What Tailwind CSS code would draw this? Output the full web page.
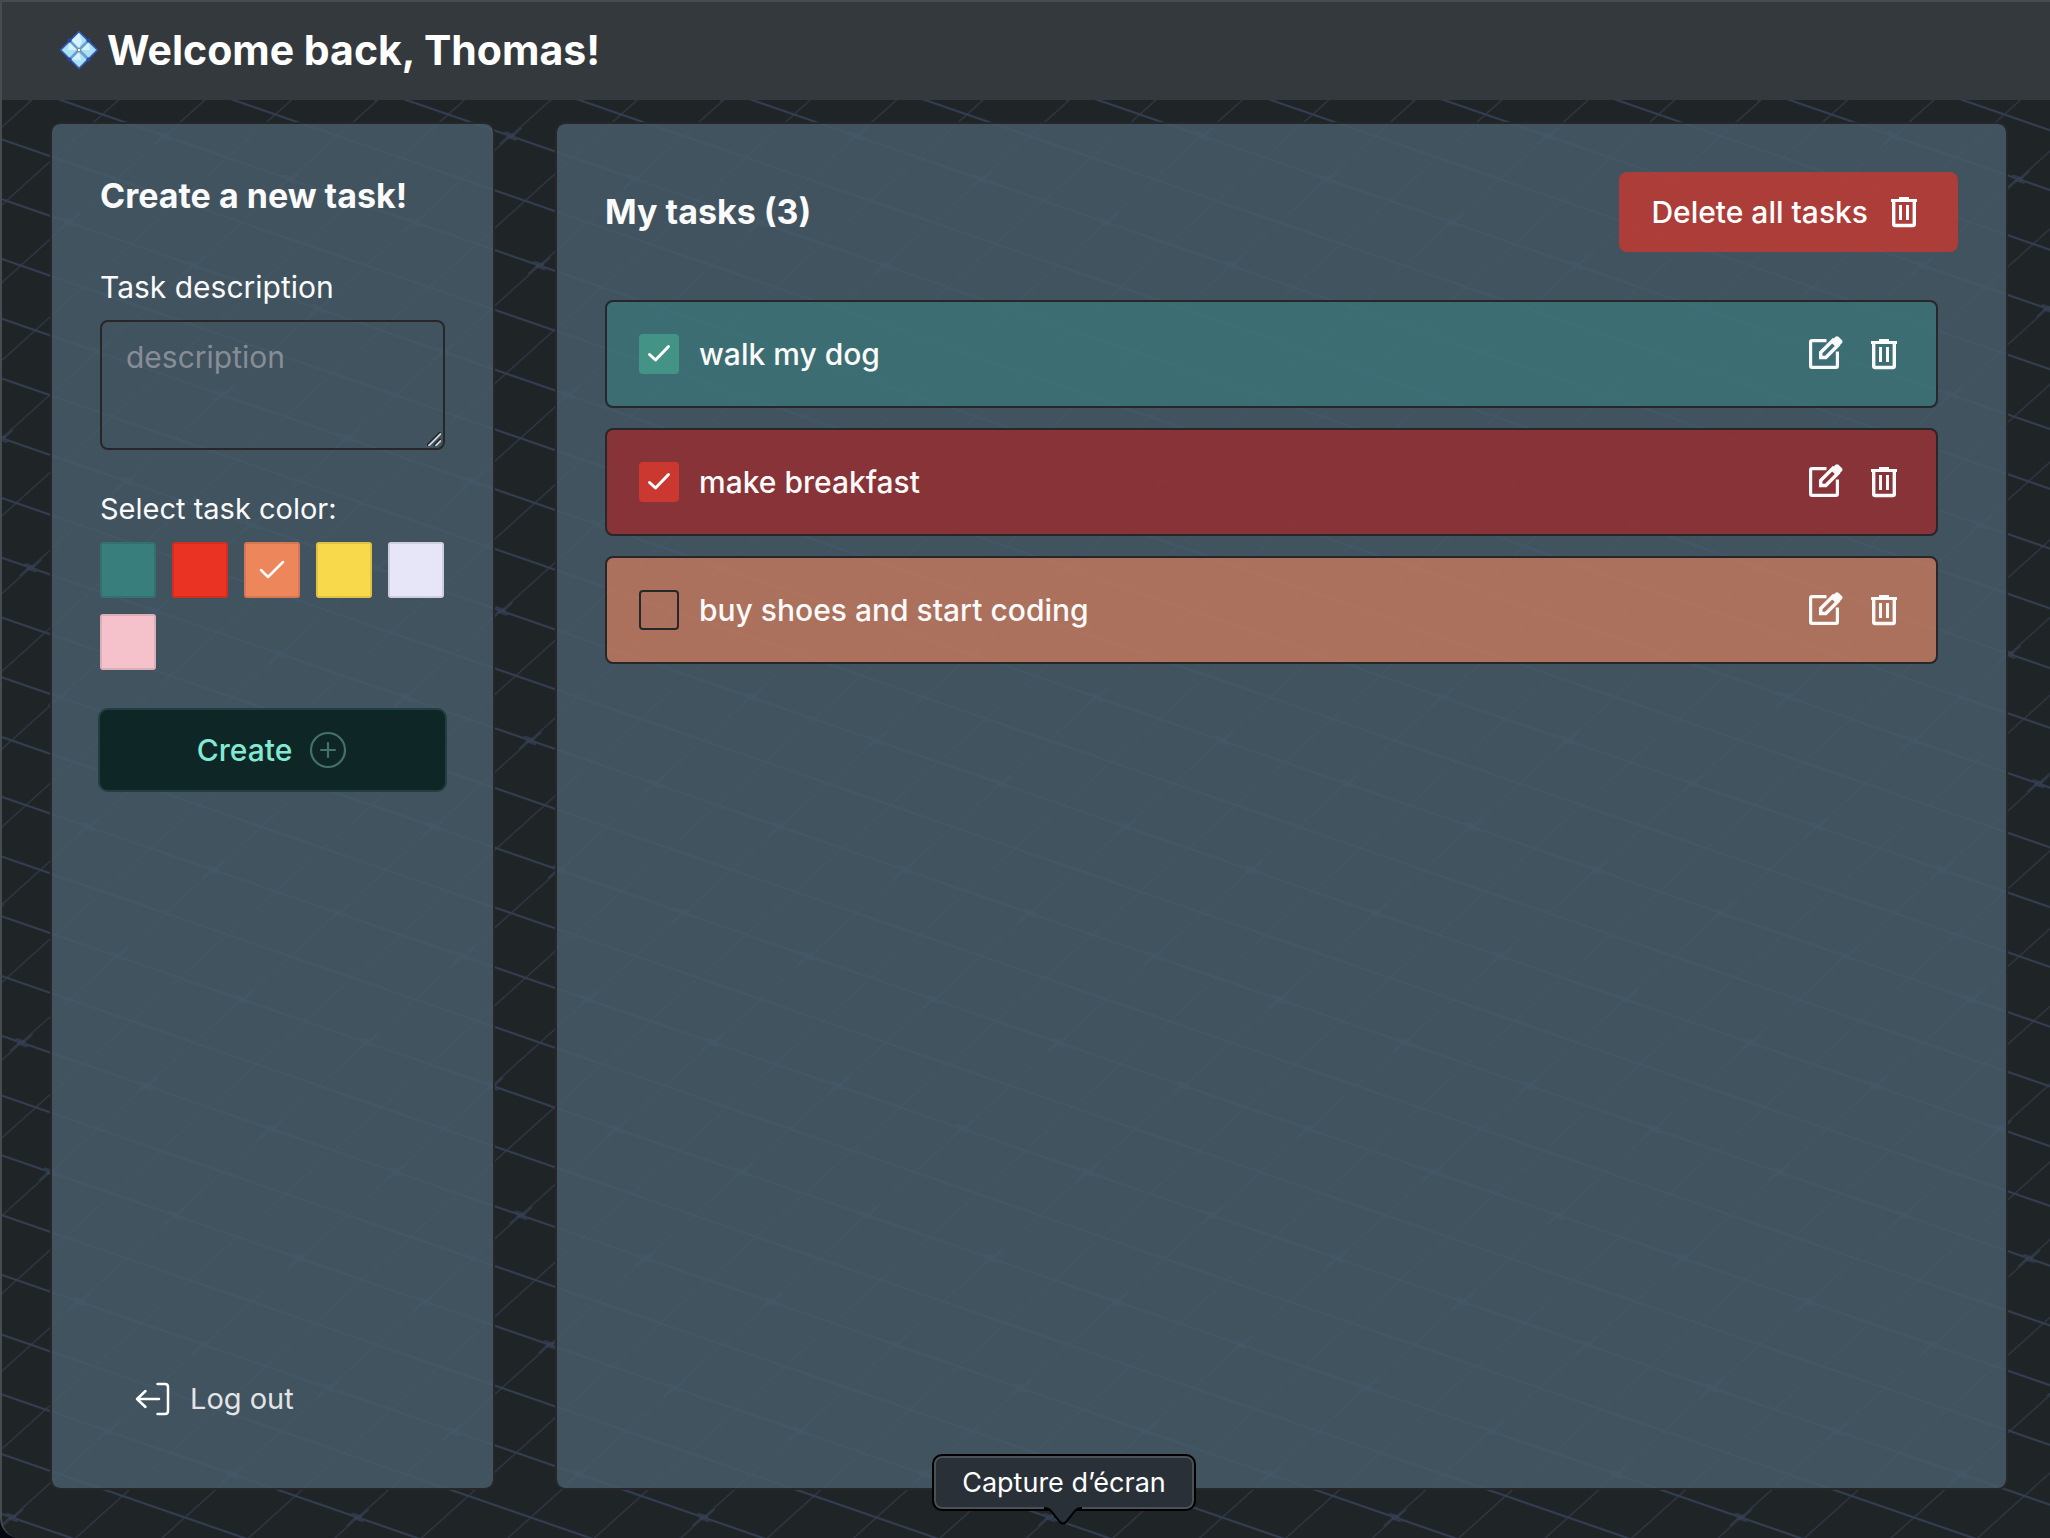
<!DOCTYPE html>
<html lang="en" class="bg-[#070912]">
<head>
<meta charset="utf-8">
<meta name="viewport" content="width=device-width, initial-scale=1">
<title>My tasks</title>
<script src="https://cdn.jsdelivr.net/npm/@tailwindcss/browser@4"></script>
</head>
<body>
<div class="relative isolate flex min-h-screen flex-col overflow-hidden rounded-bl-[20px] border-t-2 border-l-2 border-[#474c50] bg-[#1f2427] font-['Inter',sans-serif] text-[30px] leading-[42px] text-[#fafafa]">

<!-- Backdrop grid -->
<svg class="absolute -top-0.5 -left-0.5 -z-10 h-screen w-screen" aria-hidden="true">
  <defs>
    <pattern id="grid" width="100" height="100" patternUnits="userSpaceOnUse" patternTransform="matrix(1.249 .4317 .96 -.8634 61.6 190)">
      <g fill="none" stroke="#374359">
        <path d="M0 25H100M0 75H100" stroke-width="1.5"/>
        <path d="M25 0V100M75 0V100" stroke="#353d4c" stroke-width=".9"/>
        <path d="M19 76.800H27M23 73.200H31" stroke-width=".9"/>
        <path d="M26.200 74V85M23.800 65V76" stroke-width=".8"/>
      </g>
    </pattern>
  </defs>
  <rect width="100%" height="100%" fill="url(#grid)"/>
</svg>

<!-- Shared icons -->
<svg class="hidden">
  <symbol id="trash" viewBox="0 0 32 32" fill="none" stroke="currentColor" stroke-width="3">
    <path d="M3 4.500H29M11 2.500H21"/>
    <path d="M5.700 5V28Q5.700 29.500 7.200 29.500H24.800Q26.300 29.500 26.300 28V5" stroke-width="3.400"/>
    <path d="M12.500 9V24M19.500 9V24"/>
  </symbol>
  <symbol id="edit" viewBox="0 0 36 36" fill="none" stroke="currentColor" stroke-width="3.200">
    <path d="M18.500 4.600H4Q2.600 4.600 2.600 6V30Q2.600 31.400 4 31.400H28Q29.400 31.400 29.400 30V15.500"/>
    <path d="M12.700 16.500 25 4.300 30 9.300 17.800 21.500H12.700Z" stroke-width="3.500"/>
    <path d="M22.500 6 27.500 .8Q29 -.2 30.500 .8L34 4.300Q35 5.500 34 7L29 12Z" fill="currentColor" stroke="none"/>
  </symbol>
</svg>

<header class="flex h-[98px] items-center gap-2 bg-[#34393d] pb-0.5 pl-[57px]">
  <svg class="size-10" viewBox="0 0 40 40" aria-hidden="true">
    <path d="M20 1.500 38.500 20 20 38.500 1.500 20Z" fill="#6f9fc4" stroke="#3557b5" stroke-width="1.500" stroke-linejoin="round"/>
    <g fill="#a9e0fa">
      <path d="M20 3 27.500 10.500 20 18 12.500 10.500Z"/><path d="M29.500 12.500 37 20 29.500 27.500 22 20Z"/><path d="M20 22 27.500 29.500 20 37 12.500 29.500Z"/><path d="M10.500 12.500 18 20 10.500 27.500 3 20Z"/>
    </g>
    <g fill="#d3f4fe"><path d="M20 3 23 11 20 18 12.500 10.500Z"/><path d="M29.500 12.500 31 20 22 20Z"/><path d="M20 22 22 30 12.500 29.500Z"/><path d="M10.500 12.500 18 20 9 20Z"/></g>
    <g fill="#2748b0"><circle cx="10.500" cy="10.500" r="2"/><circle cx="29.500" cy="10.500" r="2"/><circle cx="10.500" cy="29.500" r="2"/><circle cx="29.500" cy="29.500" r="2"/></g>
    <circle cx="20" cy="20" r="1.700" fill="#fff" stroke="#7b8a94"/>
  </svg>
  <h1 class="text-[41px] leading-[60px] font-bold text-white">Welcome back, Thomas!</h1>
</header>

<main class="flex flex-1 gap-[60px] pt-[22px] pr-[42px] pb-12 pl-12">
  <aside class="flex w-[445px] shrink-0 flex-col rounded-[10px] border-2 border-[#27272a] bg-[#475c6a]/85 bg-clip-padding px-12 pt-12 pb-[68px]">
    <form class="flex flex-col">
      <h2 class="text-[34px] leading-[48px] font-bold">Create a new task!</h2>
      <label for="desc" class="mt-[46px]">Task description</label>
      <div class="relative mt-3 flex">
        <textarea id="desc" placeholder="description" class="h-[130px] w-full resize-none rounded-lg border-2 border-[#27272a] px-6 py-[14px] placeholder:text-[#878d97] focus:outline-none"></textarea>
        <svg class="pointer-events-none absolute right-1 bottom-1 size-[14px]" viewBox="0 0 14 14" aria-hidden="true"><path d="M0 13.500 13.500 0M7 13.500 13.500 7" stroke="#1c2228" stroke-width="2"/><path d="M1.500 14 14 1.500M8.500 14 14 8.500" stroke="#d0d3d6" stroke-width="1.800"/></svg>
      </div>
      <fieldset class="mt-[38px]">
        <legend class="text-[29px]">Select task color:</legend>
        <div class="mt-3 flex flex-wrap gap-4">
          <input type="radio" name="color" aria-label="Teal" class="size-14 appearance-none rounded-[3px] border-2 border-black/10 bg-[#377e7d]">
          <input type="radio" name="color" aria-label="Red" class="size-14 appearance-none rounded-[3px] border-2 border-black/10 bg-[#ea3323]">
          <span class="relative size-14">
            <input type="radio" name="color" aria-label="Orange" checked class="size-14 appearance-none rounded-[3px] border-2 border-black/10 bg-[#ee865b] align-top">
            <svg class="pointer-events-none absolute inset-0 size-14" viewBox="0 0 56 56" fill="none" stroke="white" stroke-width="2.500" stroke-linecap="round" stroke-linejoin="round"><path d="M17 28 24 35 39 20"/></svg>
          </span>
          <input type="radio" name="color" aria-label="Yellow" class="size-14 appearance-none rounded-[3px] border-2 border-black/10 bg-[#f8d94c]">
          <input type="radio" name="color" aria-label="Lavender" class="size-14 appearance-none rounded-[3px] border-2 border-black/10 bg-[#e6e6f8]">
          <input type="radio" name="color" aria-label="Pink" class="size-14 appearance-none rounded-[3px] border-2 border-black/10 bg-[#f5c2cb]">
        </div>
      </fieldset>
      <button type="button" class="-mx-0.5 mt-[38px] flex h-[84px] items-center justify-center gap-4 rounded-[10px] border-2 border-[#1f3f40] bg-[#0f2627] font-medium text-[#82ead3]">
        Create
        <svg class="size-10 text-[#437267]" viewBox="0 0 40 40" fill="none" stroke="currentColor" stroke-width="2.200" stroke-linecap="round"><circle cx="20" cy="20" r="17"/><path d="M20 13V27M13 20H27"/></svg>
      </button>
    </form>
    <a href="#" class="mt-auto ml-8 flex items-center gap-[18px] text-[29px] text-[#e4e4e7]">
      <svg class="size-10 text-white" viewBox="0 0 40 40" fill="none" stroke="currentColor" stroke-width="2.500" stroke-linecap="round" stroke-linejoin="round"><path d="M25.500 5H33Q36 5 36 8V32Q36 35 33 35H25.500M27 20H5M13.500 12 5 20 13.500 28"/></svg>
      Log out
    </a>
  </aside>

  <section class="min-w-0 flex-1 rounded-[10px] border-2 border-[#27272a] bg-[#475c6a]/85 bg-clip-padding p-12">
    <div class="flex items-center justify-between">
      <h2 class="text-[34px] leading-[48px] font-bold">My tasks (3)</h2>
      <button type="button" class="flex h-20 items-center gap-5 rounded-lg bg-[#da3529]/70 pr-[38px] pl-8 font-medium text-white">
        Delete all tasks
        <svg class="size-8"><use href="#trash"/></svg>
      </button>
    </div>
    <ul class="mt-12 mr-5 flex flex-col gap-5">
      <li class="flex h-[108px] items-center rounded-lg border-2 border-[#27272a] bg-[#397f81]/60 pr-9 pl-8 font-medium">
        <label class="relative flex items-center gap-5">
          <input type="checkbox" checked class="size-10 appearance-none rounded-[4px] bg-[#439486]">
          <svg class="pointer-events-none absolute left-0 size-10" viewBox="0 0 40 40" fill="none" stroke="white" stroke-width="3" stroke-linecap="round" stroke-linejoin="round"><path d="M10.500 20.500 16.500 26 29.500 12.500"/></svg>
          walk my dog
        </label>
        <button type="button" aria-label="Edit" class="ml-auto"><svg class="size-9"><use href="#edit"/></svg></button>
        <button type="button" aria-label="Delete" class="ml-6"><svg class="size-8"><use href="#trash"/></svg></button>
      </li>
      <li class="flex h-[108px] items-center rounded-lg border-2 border-[#27272a] bg-[#a52728]/70 pr-9 pl-8 font-medium">
        <label class="relative flex items-center gap-5">
          <input type="checkbox" checked class="size-10 appearance-none rounded-[4px] bg-[#cb3830]">
          <svg class="pointer-events-none absolute left-0 size-10" viewBox="0 0 40 40" fill="none" stroke="white" stroke-width="3" stroke-linecap="round" stroke-linejoin="round"><path d="M10.500 20.500 16.500 26 29.500 12.500"/></svg>
          make breakfast
        </label>
        <button type="button" aria-label="Edit" class="ml-auto"><svg class="size-9"><use href="#edit"/></svg></button>
        <button type="button" aria-label="Delete" class="ml-6"><svg class="size-8"><use href="#trash"/></svg></button>
      </li>
      <li class="flex h-[108px] items-center rounded-lg border-2 border-[#27272a] bg-[#d87f5d]/70 pr-9 pl-8 font-medium">
        <label class="relative flex items-center gap-5">
          <input type="checkbox" class="size-10 appearance-none rounded-[4px] border-2 border-[#27272a]">
          buy shoes and start coding
        </label>
        <button type="button" aria-label="Edit" class="ml-auto"><svg class="size-9"><use href="#edit"/></svg></button>
        <button type="button" aria-label="Delete" class="ml-6"><svg class="size-8"><use href="#trash"/></svg></button>
      </li>
    </ul>
  </section>
</main>

<!-- Dock tooltip -->
<div role="tooltip" class="absolute bottom-[27px] left-[930px] flex h-[57px] w-[264px] items-center justify-center rounded-[10px] border-2 border-black bg-[#293038] text-[27px] leading-[36px] text-white ring-2 ring-[#4b5054] ring-inset">
  Capture d’écran
  <svg class="absolute -bottom-[18px] left-[110px] h-5 w-10" viewBox="0 0 40 20" aria-hidden="true"><path d="M0 0Q5 1 8 5L16 15Q19 18 22 15L30 5Q33 1 38 0Z" fill="#293038"/><path d="M0 1Q5 1 8 5L16 15Q19 18 22 15L30 5Q33 1 38 1" fill="none" stroke="#000" stroke-width="2"/></svg>
</div>
</div>
</body>
</html>
